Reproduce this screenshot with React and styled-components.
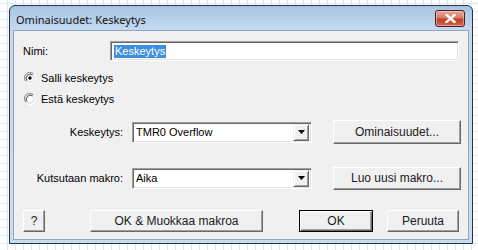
import React from "react";
import styled, { createGlobalStyle } from "styled-components";

const GlobalStyle = createGlobalStyle`
  html, body {
    margin: 0;
    padding: 0;
  }
  body {
    width: 478px;
    height: 250px;
    overflow: hidden;
    background-color: #fbfdff;
    background-image:
      linear-gradient(to right, #d9e6f3 1px, transparent 1px),
      linear-gradient(to bottom, #d9e6f3 1px, transparent 1px);
    background-size: 8px 8px;
    background-position: 7px 3px;
    font-family: "Liberation Sans", Arial, sans-serif;
    font-size: 11px;
    color: #000;
  }
`;

const Window = styled.div`
  box-sizing: border-box;
  margin: 5px 0 0 9px;
  width: 464px;
  height: 239px;
  border: 1px solid #2a3440;
  border-radius: 6px 6px 0 0;
  padding: 0 3px 3px 3px;
  background: linear-gradient(to bottom, #a9c5e4 0px, #c4d9ee 24px, #c9ddf0 100%);
  display: flex;
  flex-direction: column;
`;

const TitleBar = styled.div`
  height: 24px;
  flex: none;
  display: flex;
  align-items: flex-start;
  justify-content: space-between;
  padding-left: 3px;
`;

const Title = styled.span`
  font-family: "Noto Sans", "Open Sans", sans-serif;
  font-size: 11px;
  line-height: 14px;
  margin-top: 7px;
  color: #111;
`;

const CloseButton = styled.div`
  box-sizing: border-box;
  width: 30px;
  height: 17px;
  margin: 4px 4px 0 0;
  border: 1px solid #4a1e16;
  border-radius: 3px;
  background: linear-gradient(to bottom, #e9a99a 0%, #d77b66 45%, #c0402a 55%, #d0664f 100%);
  box-shadow: inset 0 0 0 1px rgba(255, 220, 210, 0.5);
  display: flex;
  align-items: center;
  justify-content: center;
`;

const Client = styled.div`
  flex: 1;
  box-sizing: border-box;
  border: 1px solid #8ea5bf;
  background: #f0f0f0;
  padding: 10px 7px 0 9px;
  display: flex;
  flex-direction: column;
`;

const Row = styled.div`
  display: flex;
  align-items: center;
  height: ${(p) => p.$h || 24}px;
  margin-top: ${(p) => p.$mt || 0}px;
`;

const Label = styled.span`
  width: ${(p) => p.$w}px;
  flex: none;
  text-align: ${(p) => p.$align || "left"};
  white-space: nowrap;
`;

const sunken = `
  box-sizing: border-box;
  background: #fff;
  border-style: solid;
  border-width: 1px;
  border-color: #a0a0a0 #ffffff #ffffff #a0a0a0;
  box-shadow: inset 1px 1px 0 #696969, inset -1px -1px 0 #e3e3e3;
`;

const TextInput = styled.div`
  ${sunken}
  flex: 1;
  height: 20px;
  margin-right: 2px;
  display: flex;
  align-items: center;
  padding-left: 3px;
`;

const Selected = styled.span`
  background: #3d8fe0;
  color: #fff;
  line-height: 13px;
  padding: 0 1px;
`;

const RadioRow = styled.label`
  display: flex;
  align-items: center;
  height: 16px;
  margin-top: ${(p) => p.$mt}px;
  padding-left: 1px;
  gap: 5px;
`;

const Select = styled.div`
  ${sunken}
  width: 180px;
  height: 21px;
  margin: 0 0 0 9px;
  display: flex;
  align-items: center;
  justify-content: space-between;
  padding: 0 2px 0 3px;
`;

const ArrowButton = styled.div`
  box-sizing: border-box;
  width: 16px;
  height: 17px;
  background: #f0f0f0;
  border-style: solid;
  border-width: 1px;
  border-color: #f0f0f0 #696969 #696969 #f0f0f0;
  box-shadow: inset 1px 1px 0 #ffffff, inset -1px -1px 0 #a0a0a0;
  display: flex;
  align-items: center;
  justify-content: center;
`;

const Button = styled.div`
  box-sizing: border-box;
  width: ${(p) => p.$w}px;
  height: ${(p) => p.$h || 22}px;
  margin-left: ${(p) => p.$ml || 0}px;
  flex: none;
  background: #f0f0f0;
  border-style: solid;
  border-width: 1px;
  border-color: ${(p) => (p.$default ? "#000" : "#ffffff #696969 #696969 #ffffff")};
  box-shadow: ${(p) =>
    p.$default
      ? "inset 1px 1px 0 #ffffff, inset -1px -1px 0 #696969, inset -2px -2px 0 #a0a0a0"
      : "inset -1px -1px 0 #a0a0a0"};
  display: flex;
  align-items: center;
  justify-content: center;
  white-space: nowrap;
  font-size: 12px;
  color: #1a1a1a;
`;

const Radio = ({ checked }) => (
  <svg width="12" height="12" viewBox="0 0 12 12">
    <path d="M2 9.5A5 5 0 0 1 9.5 2" stroke="#808080" fill="none" />
    <path d="M2.5 10A5 5 0 0 0 10 2.5" stroke="#ffffff" fill="none" />
    <circle cx="6" cy="6" r="4.2" fill="#fff" />
    <path d="M3 8.6A4 4 0 0 1 8.6 3" stroke="#404040" fill="none" />
    <path d="M3.4 9A4 4 0 0 0 9 3.4" stroke="#dcdcdc" fill="none" />
    {checked && <circle cx="6" cy="6" r="1.7" fill="#000" />}
  </svg>
);

const Arrow = () => (
  <svg width="7" height="4" viewBox="0 0 7 4">
    <path d="M0 0h7L3.5 4z" fill="#000" />
  </svg>
);

const CloseX = () => (
  <svg width="11" height="9" viewBox="0 0 11 9">
    <path
      d="M1.5 1l8 7M9.5 1l-8 7"
      stroke="#fff"
      strokeWidth="2.4"
      strokeLinecap="square"
    />
  </svg>
);

export default function App() {
  return (
    <>
      <GlobalStyle />
      <Window>
        <TitleBar>
          <Title>Ominaisuudet: Keskeytys</Title>
          <CloseButton>
            <CloseX />
          </CloseButton>
        </TitleBar>
        <Client>
          <Row $h={20}>
            <Label $w={87}>Nimi:</Label>
            <TextInput>
              <Selected>Keskeytys</Selected>
            </TextInput>
          </Row>

          <RadioRow $mt={9}>
            <Radio checked />
            <span>Salli keskeytys</span>
          </RadioRow>
          <RadioRow $mt={5}>
            <Radio />
            <span>Estä keskeytys</span>
          </RadioRow>

          <Row $mt={13}>
            <Label $w={100} $align="right">Keskeytys:</Label>
            <Select>
              <span>TMR0 Overflow</span>
              <ArrowButton>
                <Arrow />
              </ArrowButton>
            </Select>
            <Button $w={128} $h={24} $ml={21}>Ominaisuudet...</Button>
          </Row>

          <Row $mt={22}>
            <Label $w={100} $align="right">Kutsutaan makro:</Label>
            <Select>
              <span>Aika</span>
              <ArrowButton>
                <Arrow />
              </ArrowButton>
            </Select>
            <Button $w={128} $h={23} $ml={21}>Luo uusi makro...</Button>
          </Row>

          <Row $h={22} $mt={20}>
            <Button $w={22}>?</Button>
            <Button $w={173} $ml={45}>OK &amp; Muokkaa makroa</Button>
            <Button $w={74} $ml={36} $default>OK</Button>
            <Button $w={72} $ml={14}>Peruuta</Button>
          </Row>
        </Client>
      </Window>
    </>
  );
}
